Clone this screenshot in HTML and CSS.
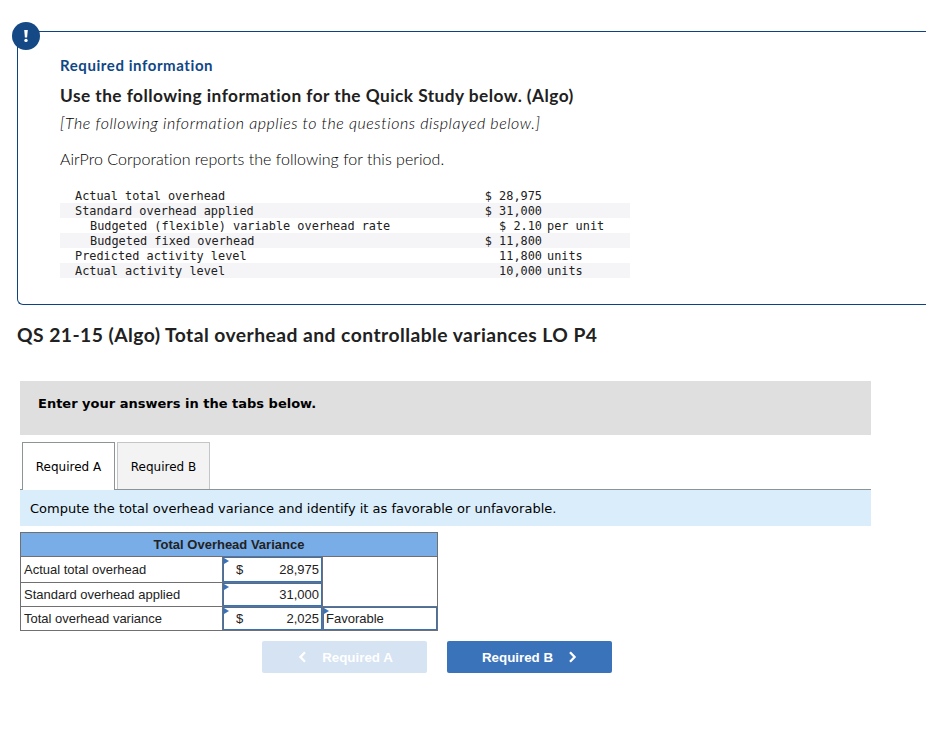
FILE: index.html
```html
<!DOCTYPE html>
<html lang="en">
<head>
<meta charset="utf-8">
<title>QS 21-15 (Algo)</title>
<link rel="stylesheet" href="styles.css">
</head>
<body>
<section class="info">
  <span class="badge"><svg width="28" height="28" viewBox="0 0 28 28"><path d="M12.2 8h3.6l-.7 7.6h-2.2z"/><circle cx="14" cy="18.4" r="1.7"/></svg></span>
  <h2 class="info-label">Required information</h2>
  <h3 class="info-title">Use the following information for the Quick Study below. (Algo)</h3>
  <p class="info-note">[The following information applies to the questions displayed below.]</p>
  <p class="info-text">AirPro Corporation reports the following for this period.</p>
  <div class="report">
    <div class="line"><span class="name">Actual total overhead</span><span class="amount">$ 28,975</span><span></span></div>
    <div class="line"><span class="name">Standard overhead applied</span><span class="amount">$ 31,000</span><span></span></div>
    <div class="line"><span class="name sub">Budgeted (flexible) variable overhead rate</span><span class="amount">$ 2.10</span><span>per unit</span></div>
    <div class="line"><span class="name sub">Budgeted fixed overhead</span><span class="amount">$ 11,800</span><span></span></div>
    <div class="line"><span class="name">Predicted activity level</span><span class="amount">11,800</span><span>units</span></div>
    <div class="line"><span class="name">Actual activity level</span><span class="amount">10,000</span><span>units</span></div>
  </div>
</section>
<h1 class="question">QS 21-15 (Algo) Total overhead and controllable variances LO P4</h1>
<main class="answer">
  <div class="prompt">Enter your answers in the tabs below.</div>
  <div class="tabs">
    <div class="tab active">Required A</div>
    <div class="tab">Required B</div>
  </div>
  <div class="instruction">Compute the total overhead variance and identify it as favorable or unfavorable.</div>
  <div class="sheet">
    <div class="cell head">Total Overhead Variance</div>
    <div class="cell">Actual total overhead</div>
    <div class="cell input"><span>$</span><span>28,975</span></div>
    <div class="cell blank"></div>
    <div class="cell">Standard overhead applied</div>
    <div class="cell input"><span></span><span>31,000</span></div>
    <div class="cell">Total overhead variance</div>
    <div class="cell input"><span>$</span><span>2,025</span></div>
    <div class="cell input choice">Favorable</div>
  </div>
  <div class="nav">
    <div class="button disabled"><svg width="9" height="12" viewBox="0 0 9 12"><path d="M7 1.2 2.4 6 7 10.8"/></svg><span>Required A</span></div>
    <div class="button"><span>Required B</span><svg width="9" height="12" viewBox="0 0 9 12"><path d="M2 1.2 6.6 6 2 10.8"/></svg></div>
  </div>
</main>
</body>
</html>
```
FILE: styles.css
```css
* { box-sizing: border-box; }
body {
  margin: 0;
  padding-top: 31px;
  background: #fff;
  color: #212121;
  font-family: Lato, sans-serif;
  font-variant-ligatures: none;
  overflow: hidden;
}
h1, h2, h3, p { margin: 0; white-space: nowrap; }
.info {
  position: relative;
  height: 274px;
  margin-left: 17px;
  padding: 23px 0 0 42px;
  border: 1px solid #0d4480;
  border-right: 0;
  border-radius: 0 0 0 6px;
}
.badge {
  position: absolute;
  left: -6px;
  top: -10px;
  width: 28px;
  height: 28px;
  border-radius: 50%;
  background: #154985;
}
.badge svg { display: block; fill: #fff; }
.info-label { color: #0f4785; font-size: 15px; line-height: 20px; letter-spacing: .58px; }
.info-title { margin-top: 8px; font-size: 17.3px; line-height: 25px; letter-spacing: .45px; }
.info-note { margin-top: 5px; font-size: 16px; line-height: 20px; font-style: italic; font-weight: 300; letter-spacing: .56px; }
.info-text { margin-top: 16px; font-size: 16px; line-height: 20px; font-weight: 300; letter-spacing: .03px; }
.info-note, .info-text { color: #000; }
.report {
  width: 570px;
  margin-top: 19px;
  font: 11.88px/17px "DejaVu Sans Mono", monospace;
}
.line { display: grid; grid-template-columns: 372px 110px 1fr; height: 15px; white-space: pre; }
.line:nth-child(even) { background: #f5f5f7; }
.name { padding-left: 15px; }
.sub { padding-left: 30px; }
.amount { text-align: right; }
.amount + span { padding-left: 5px; }
.question { margin: 17px 0 0 17px; font-size: 19.3px; line-height: 26px; letter-spacing: .45px; }
.answer { width: 851px; margin: 33px 0 0 20px; color: #000; }
.prompt {
  height: 54px;
  padding: 13px 18px;
  background: #dfdfdf;
  font: bold 13px/20px "DejaVu Sans", sans-serif;
}
.tabs {
  display: flex;
  gap: 2px;
  margin-top: 7px;
  height: 48px;
  padding-left: 2px;
  border-bottom: 1px solid #8c9496;
}
.tab {
  width: 93px;
  height: 47px;
  border: 1px solid #c4c5c9;
  border-bottom: 0;
  background: #f3f3f4;
  font: 12px/48px "DejaVu Sans", sans-serif;
  text-align: center;
  white-space: nowrap;
}
.tab.active { height: 48px; border-color: #8c9496; background: #fff; }
.instruction {
  height: 36px;
  padding: 0 10px;
  background: #d9edfa;
  font: 13px/37px "DejaVu Sans", sans-serif;
  white-space: nowrap;
}
.sheet {
  display: grid;
  grid-template-columns: 201px 99px 114px;
  grid-template-rows: 23px 25px 23px 23px;
  gap: 1px;
  width: 418px;
  margin-top: 6px;
  padding: 1px;
  background: #707070;
  color: #222;
  font: 13px/23px "Liberation Sans", Arial, sans-serif;
}
.cell { display: flex; align-items: center; padding-left: 3px; background: #fff; white-space: nowrap; }
.head { grid-column: 1 / 4; justify-content: center; padding: 0; background: #78ade7; font-weight: bold; }
.blank { grid-row: span 2; }
.input {
  position: relative;
  justify-content: space-between;
  padding: 0 2px 0 12px;
  border: 1px solid #3a72b9;
}
.input::before {
  content: "";
  position: absolute;
  left: 0;
  top: 0;
  border-left: 5px solid #3a72b9;
  border-top: 3px solid transparent;
  border-bottom: 3px solid transparent;
}
.choice { padding-left: 2px; }
.nav { display: flex; gap: 20px; margin: 10px 0 0 242px; }
.button {
  display: flex;
  align-items: center;
  justify-content: center;
  gap: 15px;
  width: 165px;
  height: 32px;
  border-radius: 2px;
  background: #3a73ba;
  color: #fff;
  font: bold 13.33px/32px "Liberation Sans", Arial, sans-serif;
}
.button span { padding-top: 1px; }
.button.disabled { padding-left: 2px; background: #d5e3f2; }
.button svg { fill: none; stroke: #fff; stroke-width: 2.3; }
```
